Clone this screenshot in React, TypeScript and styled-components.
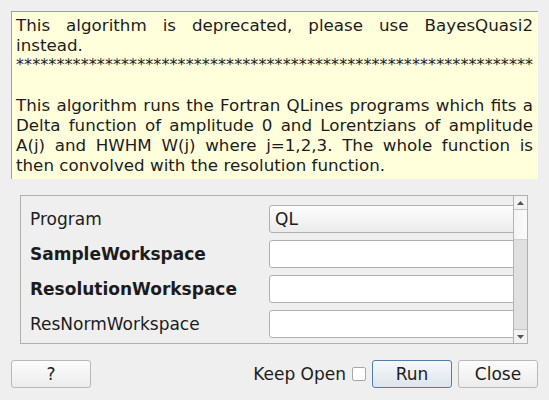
import React from "react";
import styled, { createGlobalStyle } from "styled-components";

const GlobalStyle = createGlobalStyle`
  html, body { margin: 0; padding: 0; background: #efefef; }
  body {
    font-family: "DejaVu Sans", "Liberation Sans", sans-serif;
    font-size: 17px;
    color: #1c1c1c;
  }
`;

const Window = styled.div`
  width: 549px;
  height: 400px;
  box-sizing: border-box;
  padding: 11px 11px 0 11px;
  display: flex;
  flex-direction: column;
  background: #efefef;
  overflow: hidden;
`;

const Description = styled.div`
  height: 168px;
  box-sizing: border-box;
  border-top: 1px solid #a0a0a0;
  border-left: 1px solid #a0a0a0;
  background: #ffffdc;
  padding: 3px 5px 0 4px;
  font-size: 16.7px;
  line-height: 20px;
  text-align: justify;
`;

const Para = styled.p`
  margin: 0;
  min-height: 20px;
`;

const Stars = styled.p`
  margin: 0;
  white-space: nowrap;
  font-size: 16px;
  letter-spacing: 0.08px;
`;

const PropsArea = styled.div`
  margin: 16px 10px 0 9px;
  height: 149px;
  box-sizing: border-box;
  border: 1px solid #b0b0b0;
  display: flex;
`;

const Viewport = styled.div`
  flex: 1;
  overflow: hidden;
  padding: 9px 0 0 9px;
`;

const Grid = styled.div`
  display: grid;
  grid-template-columns: 239px 260px;
  row-gap: 7px;
`;

const Label = styled.div<{ $bold?: boolean }>`
  height: 28px;
  line-height: 28px;
  font-weight: ${(p) => (p.$bold ? 700 : 400)};
  white-space: nowrap;
`;

const Combo = styled.div`
  height: 28px;
  box-sizing: border-box;
  border: 1px solid #b0b0b0;
  border-radius: 3px;
  background: linear-gradient(#fdfdfd, #ebebeb);
  padding-left: 5px;
  line-height: 26px;
`;

const Field = styled.div`
  height: 28px;
  box-sizing: border-box;
  border: 1px solid #b0b0b0;
  border-radius: 3px;
  background: #ffffff;
`;

const ScrollBar = styled.div`
  width: 13px;
  border-left: 1px solid #b4b4b4;
  display: flex;
  flex-direction: column;
  background: #e0e0e0;
`;

const ArrowButton = styled.div<{ $down?: boolean }>`
  height: 13px;
  background: #f2f2f2;
  border-bottom: ${(p) => (p.$down ? "none" : "1px solid #c4c4c4")};
  border-top: ${(p) => (p.$down ? "1px solid #c4c4c4" : "none")};
  display: flex;
  align-items: center;
  justify-content: center;
`;

const Handle = styled.div`
  height: 29px;
  background: linear-gradient(90deg, #f4f4f4, #fbfbfb);
  border-bottom: 1px solid #d0d0d0;
`;

const Track = styled.div`
  flex: 1;
`;

const ButtonRow = styled.div`
  margin-top: 16px;
  display: flex;
  align-items: center;
  gap: 6px;
`;

const Button = styled.button<{ $default?: boolean }>`
  width: 80px;
  height: 28px;
  box-sizing: border-box;
  font-family: inherit;
  font-size: 17px;
  color: #1c1c1c;
  border-radius: 3px;
  border: 1px solid ${(p) => (p.$default ? "#4f7fb0" : "#b8b8b8")};
  background: ${(p) =>
    p.$default
      ? "linear-gradient(#f6f8fa, #dde4ec)"
      : "linear-gradient(#fcfcfc, #ececec)"};
  padding: 0;
`;

const Spacer = styled.div`
  flex: 1;
`;

const CheckText = styled.span`
  white-space: nowrap;
`;

const CheckBox = styled.span`
  width: 14px;
  height: 14px;
  box-sizing: border-box;
  border: 1px solid #a8a8a8;
  border-radius: 2px;
  background: #ffffff;
`;

const Arrow = ({ down }: { down?: boolean }) => (
  <svg width="7" height="4" viewBox="0 0 7 4">
    <polygon points={down ? "0,0 7,0 3.5,4" : "0,4 7,4 3.5,0"} fill="#555" />
  </svg>
);

export default function App() {
  return (
    <>
      <GlobalStyle />
      <Window>
        <Description>
          <Para>
            This algorithm is deprecated, please use BayesQuasi2 instead.
          </Para>
          <Stars>{"*".repeat(64)}</Stars>
          <Para />
          <Para>
            This algorithm runs the Fortran QLines programs which fits a
            Delta function of amplitude 0 and Lorentzians of amplitude A(j)
            and HWHM W(j) where j=1,2,3. The whole function is then convolved
            with the resolution function.
          </Para>
        </Description>
        <PropsArea>
          <Viewport>
            <Grid>
              <Label>Program</Label>
              <Combo>QL</Combo>
              <Label $bold>SampleWorkspace</Label>
              <Field />
              <Label $bold>ResolutionWorkspace</Label>
              <Field />
              <Label>ResNormWorkspace</Label>
              <Field />
            </Grid>
          </Viewport>
          <ScrollBar>
            <ArrowButton>
              <Arrow />
            </ArrowButton>
            <Handle />
            <Track />
            <ArrowButton $down>
              <Arrow down />
            </ArrowButton>
          </ScrollBar>
        </PropsArea>
        <ButtonRow>
          <Button>?</Button>
          <Spacer />
          <CheckText>Keep Open</CheckText>
          <CheckBox />
          <Button $default>Run</Button>
          <Button>Close</Button>
        </ButtonRow>
      </Window>
    </>
  );
}
